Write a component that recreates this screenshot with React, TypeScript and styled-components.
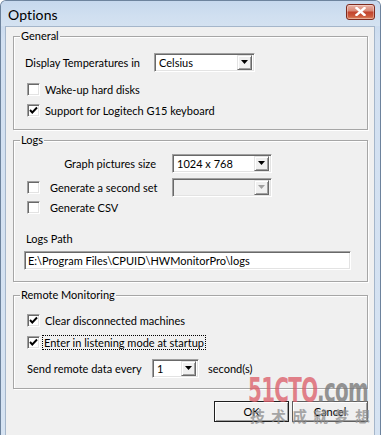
import React from "react";
import styled, { createGlobalStyle } from "styled-components";

const Global = createGlobalStyle`
  html, body { margin: 0; padding: 0; background: #fff; }
  body { overflow: hidden; }
`;

const FONT = `Lato, "Liberation Sans", Arial, sans-serif`;

const Window = styled.div`
  position: relative;
  width: 381px;
  height: 435px;
  box-sizing: border-box;
  display: flex;
  flex-direction: column;
  background: linear-gradient(#c2d5eb, #d2e0f1 40px, #d6e3f2);
  border: 1px solid #6d839d;
  border-bottom: none;
  border-radius: 6px 6px 0 0;
  overflow: hidden;
  font-family: ${FONT};
  font-size: 11px;
  color: #000;
`;

const TitleBar = styled.div`
  height: 25px;
  flex: none;
  display: flex;
  align-items: center;
  justify-content: space-between;
  padding: 0 5px 0 7px;
  background: linear-gradient(#c6d8ed, #d0dff0 60%, #d4e2f1);
`;

const Title = styled.div`
  font-size: 14px;
  color: #000;
  letter-spacing: 0.1px;
  margin-top: 1px;
`;

const CloseButton = styled.div`
  width: 29px;
  height: 16px;
  margin-top: -4px;
  box-sizing: border-box;
  border: 1px solid #7e2a1e;
  border-radius: 3px;
  background: linear-gradient(#e9b2a6 0%, #d98a78 40%, #c2442e 52%, #cc5a3c 80%, #de8a64 100%);
  display: flex;
  align-items: center;
  justify-content: center;
  box-shadow: inset 0 0 0 1px rgba(255, 255, 255, 0.35);
`;

const Client = styled.div`
  flex: 1;
  margin: 0 5px 0 4px;
  background: #f0f0f0;
  border: 1px solid #a5b6ca;
  border-bottom: none;
  padding: 9px 6px 0 7px;
  display: flex;
  flex-direction: column;
`;

const Group = styled.div<{ $h: number; $mt?: number }>`
  position: relative;
  box-sizing: border-box;
  height: ${(p) => p.$h}px;
  margin-top: ${(p) => p.$mt ?? 0}px;
  border: 1px solid #a6a6a6;
  box-shadow: inset 1px 1px 0 #fff, 1px 1px 0 #fff;
  padding-left: 11px;
  display: flex;
  flex-direction: column;
`;

const Legend = styled.span`
  position: absolute;
  top: -8px;
  left: 6px;
  padding: 0 1px;
  line-height: 14px;
  background: #f0f0f0;
`;

const Row = styled.div<{ $mt: number; $h: number; $indent?: number }>`
  display: flex;
  align-items: center;
  height: ${(p) => p.$h}px;
  margin-top: ${(p) => p.$mt}px;
  margin-left: ${(p) => p.$indent ?? 0}px;
  white-space: nowrap;
`;

const Label = styled.span<{ $w?: number; $right?: boolean; $gap?: number }>`
  display: inline-block;
  width: ${(p) => (p.$w ? `${p.$w}px` : "auto")};
  text-align: ${(p) => (p.$right ? "right" : "left")};
  margin-left: ${(p) => p.$gap ?? 0}px;
  line-height: 14px;
`;

const FocusText = styled.span<{ $gap?: number }>`
  margin-left: ${(p) => p.$gap ?? 0}px;
  outline: 1px dotted #000;
  outline-offset: 0;
  padding: 0 1px;
  line-height: 13px;
`;

const Box = styled.span`
  position: relative;
  width: 13px;
  height: 13px;
  flex: none;
  box-sizing: border-box;
  background: #fff;
  border: 1px solid;
  border-color: #a0a0a0 #fff #fff #a0a0a0;
  box-shadow: inset 1px 1px 0 #696969, inset -1px -1px 0 #e3e3e3;
  display: flex;
  align-items: center;
  justify-content: center;
`;

const Combo = styled.div<{ $w: number; $disabled?: boolean; $ml?: number }>`
  width: ${(p) => p.$w}px;
  height: 19px;
  margin-left: ${(p) => p.$ml ?? 0}px;
  flex: none;
  box-sizing: border-box;
  background: ${(p) => (p.$disabled ? "#f0f0f0" : "#fff")};
  border: 1px solid;
  border-color: #a0a0a0 #fff #fff #a0a0a0;
  box-shadow: inset 1px 1px 0 #696969, inset -1px -1px 0 #e3e3e3;
  padding: 2px 2px 2px 4px;
  display: flex;
  align-items: center;
  justify-content: space-between;
`;

const ComboText = styled.span`
  line-height: 13px;
`;

const ArrowButton = styled.span<{ $disabled?: boolean }>`
  width: 15px;
  height: 15px;
  margin-top: -1px;
  flex: none;
  box-sizing: border-box;
  background: #f0f0f0;
  border: 1px solid;
  border-color: #e3e3e3 #696969 #696969 #e3e3e3;
  box-shadow: inset 1px 1px 0 #fff, inset -1px -1px 0 #a0a0a0;
  display: flex;
  align-items: center;
  justify-content: center;
  color: ${(p) => (p.$disabled ? "#a0a0a0" : "#000")};
`;

const TextField = styled.div<{ $w: number }>`
  width: ${(p) => p.$w}px;
  height: 19px;
  box-sizing: border-box;
  background: #fff;
  border: 1px solid;
  border-color: #a0a0a0 #fff #fff #a0a0a0;
  box-shadow: inset 1px 1px 0 #696969, inset -1px -1px 0 #e3e3e3;
  padding: 0 3px;
  display: flex;
  align-items: center;
  white-space: nowrap;
`;

const ButtonBar = styled.div`
  display: flex;
  justify-content: flex-end;
  gap: 3px;
  margin-top: 12px;
`;

const Button = styled.div<{ $w: number; $default?: boolean }>`
  width: ${(p) => p.$w}px;
  height: 21px;
  box-sizing: border-box;
  background: #f0f0f0;
  border: 1px solid ${(p) => (p.$default ? "#1f1f1f" : "#5e5e5e")};
  box-shadow: inset 1px 1px 0 #fff, inset -1px -1px 0 #a0a0a0;
  display: flex;
  align-items: center;
  justify-content: center;
`;

const Watermark = styled.div`
  position: absolute;
  left: 247px;
  top: 372px;
  pointer-events: none;
  display: flex;
  flex-direction: column;
`;

const MarkLogo = styled.div`
  font-family: "DejaVu Sans Condensed", "DejaVu Sans", sans-serif;
  font-weight: bold;
  font-size: 34px;
  line-height: 34px;
  letter-spacing: -1px;
  transform: scaleX(0.65);
  transform-origin: left center;
  white-space: nowrap;
`;

const MarkRed = styled.span`
  color: rgba(220, 96, 108, 0.78);
`;

const MarkGray = styled.span`
  color: rgba(120, 120, 120, 0.8);
`;

const MarkSlogan = styled.div`
  margin-top: 0px;
  margin-left: 2px;
  font-family: "Noto Sans CJK SC", sans-serif;
  font-weight: bold;
  font-size: 15px;
  line-height: 18px;
  letter-spacing: 6px;
  color: rgba(140, 140, 140, 0.75);
  white-space: nowrap;
`;

const Check = () => (
  <svg width="9" height="9" viewBox="0 0 9 9">
    <polyline points="1,4 3.3,6.5 8,1.5" fill="none" stroke="#000" strokeWidth="1.9" />
  </svg>
);

const Arrow = () => (
  <svg width="7" height="4" viewBox="0 0 7 4">
    <polygon points="0,0 7,0 3.5,4" fill="currentColor" />
  </svg>
);

const CheckBox = ({ checked }: { checked?: boolean }) => <Box>{checked && <Check />}</Box>;

const Select = ({ w, value, disabled, ml }: { w: number; value?: string; disabled?: boolean; ml?: number }) => (
  <Combo $w={w} $disabled={disabled} $ml={ml}>
    <ComboText>{value ?? ""}</ComboText>
    <ArrowButton $disabled={disabled}>
      <Arrow />
    </ArrowButton>
  </Combo>
);

export default function App() {
  return (
    <>
      <Global />
      <Window>
        <TitleBar>
          <Title>Options</Title>
          <CloseButton>
            <svg width="11" height="9" viewBox="0 0 11 9">
              <path d="M1.5 1 L9.5 8 M9.5 1 L1.5 8" stroke="#fff" strokeWidth="2.4" strokeLinecap="square" />
            </svg>
          </CloseButton>
        </TitleBar>
        <Client>
          <Group $h={94}>
            <Legend>General</Legend>
            <Row $mt={16} $h={19}>
              <Label $w={129}>Display Temperatures in</Label>
              <Select w={101} value="Celsius" />
            </Row>
            <Row $mt={11} $h={13} $indent={2}>
              <CheckBox />
              <Label $gap={5}>Wake-up hard disks</Label>
            </Row>
            <Row $mt={8} $h={13} $indent={2}>
              <CheckBox checked />
              <Label $gap={5}>Support for Logitech G15 keyboard</Label>
            </Row>
          </Group>

          <Group $h={142} $mt={10}>
            <Legend>Logs</Legend>
            <Row $mt={13} $h={19}>
              <Label $w={131} $right>Graph pictures size</Label>
              <Select w={100} value="1024 x 768" ml={16} />
            </Row>
            <Row $mt={5} $h={19} $indent={2}>
              <CheckBox />
              <Label $gap={10} $w={122}>Generate a second set</Label>
              <Select w={100} disabled />
            </Row>
            <Row $mt={4} $h={13} $indent={2}>
              <CheckBox />
              <Label $gap={10}>Generate CSV</Label>
            </Row>
            <Row $mt={17} $h={15} $indent={1}>
              <Label>Logs Path</Label>
            </Row>
            <Row $mt={5} $h={19} $indent={-1}>
              <TextField $w={327}>E:\Program Files\CPUID\HWMonitorPro\logs</TextField>
            </Row>
          </Group>

          <Group $h={94} $mt={13}>
            <Legend>Remote Monitoring</Legend>
            <Row $mt={18} $h={13} $indent={2}>
              <CheckBox checked />
              <Label $gap={5}>Clear disconnected machines</Label>
            </Row>
            <Row $mt={9} $h={13} $indent={2}>
              <CheckBox checked />
              <FocusText $gap={3}>Enter in listening mode at startup</FocusText>
            </Row>
            <Row $mt={10} $h={19} $indent={2}>
              <Label $w={125}>Send remote data every</Label>
              <Select w={47} value="1" />
              <Label $gap={9}>second(s)</Label>
            </Row>
          </Group>

          <ButtonBar>
            <Button $w={75} $default>OK</Button>
            <Button $w={76}>Cancel</Button>
          </ButtonBar>
        </Client>
        <Watermark>
          <MarkLogo>
            <MarkRed>51CTO</MarkRed>
            <MarkGray>.com</MarkGray>
          </MarkLogo>
          <MarkSlogan>技术成就梦想</MarkSlogan>
        </Watermark>
      </Window>
    </>
  );
}
